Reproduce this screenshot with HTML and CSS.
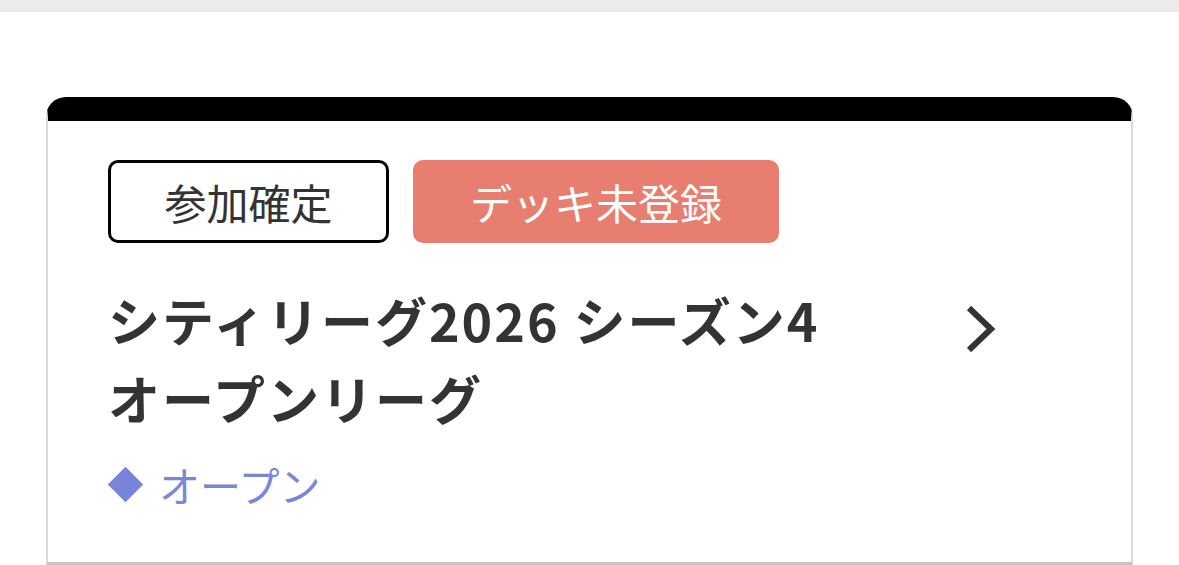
FILE: index.html
```html
<!DOCTYPE html>
<html lang="ja">
<head>
<meta charset="utf-8">
<link rel="stylesheet" href="styles.css">
</head>
<body>
<div class="topbar"></div>
<main class="page">
  <section class="card">
    <div class="badges">
      <span class="badge badge-outline">参加確定</span>
      <span class="badge badge-alert">デッキ未登録</span>
    </div>
    <div class="title-row">
      <h2 class="title">シティリーグ2026 シーズン4<br>オープンリーグ</h2>
      <svg class="chevron" width="34" height="48" viewBox="0 0 34 48" aria-hidden="true">
        <polyline points="6,3 28,24 6,45" fill="none" stroke="#333" stroke-width="6"/>
      </svg>
    </div>
    <div class="tag">
      <span class="diamond"></span>
      <span class="tag-text">オープン</span>
    </div>
  </section>
</main>
</body>
</html>
```
FILE: styles.css
```css
html, body {
  margin: 0;
  padding: 0;
  background: #ffffff;
}
body {
  font-family: "Noto Sans CJK JP", "Noto Sans", sans-serif;
  color: #333333;
}
.topbar {
  height: 12px;
  background: #ebebeb;
}
.page {
  padding: 85px 46px 0;
}
.card {
  border-top: 24px solid #000000;
  border-left: 2px solid #dadada;
  border-right: 2px solid #dadada;
  border-bottom: 3px solid #c4c4c4;
  border-radius: 20px 20px 0 0;
  padding: 39px 60px 46px 60px;
  background: #ffffff;
}
.badges {
  display: flex;
  gap: 24px;
}
.badge {
  box-sizing: border-box;
  height: 83px;
  display: flex;
  align-items: center;
  justify-content: center;
  padding: 0;
  font-size: 42px;
  line-height: 1;
  border-radius: 10px;
  white-space: nowrap;
}
.badge-outline {
  border: 3px solid #000000;
  color: #333333;
  width: 281px;
}
.badge-alert {
  background: #e87e6f;
  color: #ffffff;
  width: 366px;
}
.title-row {
  display: flex;
  align-items: flex-start;
  margin-top: 38px;
  padding-right: 74px;
}
.title {
  flex: 1;
  margin: 0;
  font-size: 52px;
  line-height: 78px;
  font-weight: 700;
  letter-spacing: 2px;
  color: #333333;
}
.chevron {
  margin-top: 24px;
  flex: none;
}
.tag {
  display: flex;
  align-items: center;
  margin-top: 16px;
  height: 63px;
  color: #7a86d8;
}
.diamond {
  width: 25px;
  height: 25px;
  background: #7784d9;
  transform: rotate(45deg);
  margin-left: 5px;
  margin-right: 21px;
}
.tag-text {
  font-size: 41px;
  line-height: 63px;
}
```
